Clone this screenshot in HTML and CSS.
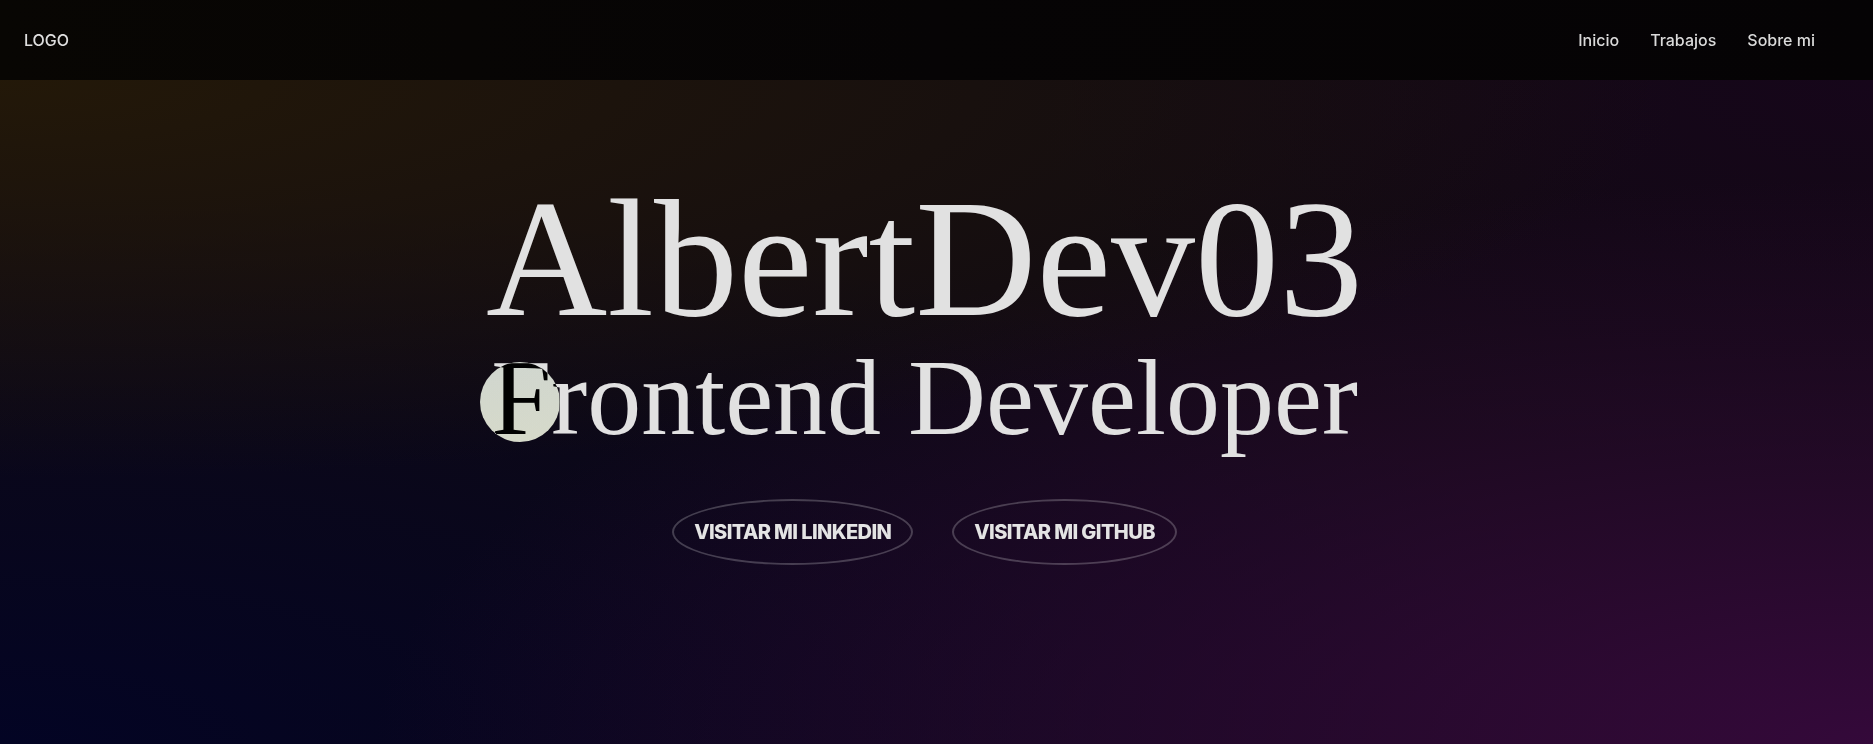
FILE: index.html
```html
<!DOCTYPE html>
<html lang="es">
<head>
<meta charset="utf-8">
<title>AlbertDev03</title>
<link rel="stylesheet" href="styles.css">
</head>
<body>
<header class="site-header">
  <a class="logo" href="#">LOGO</a>
  <nav class="nav">
    <a href="#">Inicio</a>
    <a href="#">Trabajos</a>
    <a href="#">Sobre mi</a>
  </nav>
</header>
<main class="hero">
  <div class="hero-content">
    <h1 class="title">AlbertDev03</h1>
    <h2 class="subtitle">Frontend Developer</h2>
    <div class="actions">
      <a class="btn" href="#">VISITAR MI LINKEDIN</a>
      <a class="btn" href="#">VISITAR MI GITHUB</a>
    </div>
  </div>
</main>
<div class="cursor"></div>
</body>
</html>
```

FILE: styles.css
```css
* { box-sizing: border-box; }
html, body { margin: 0; padding: 0; }
body {
  background: #0d0912;
  font-family: Inter, "Noto Sans", sans-serif;
  color: #e0e0e0;
  overflow: hidden;
  position: relative;
}
a { color: inherit; text-decoration: none; }

.site-header {
  height: 80px;
  display: flex;
  align-items: center;
  justify-content: space-between;
  padding: 0 58px 0 24px;
  background: linear-gradient(to right, #080603, #060405 50%, #050305);
}
.logo {
  font-size: 16px;
  font-weight: 500;
  color: #dedede;
}
.nav {
  display: flex;
  gap: 31px;
}
.nav a {
  font-size: 16px;
  font-weight: 500;
  color: #dadada;
}

.hero {
  min-height: 664px;
  background:
    radial-gradient(ellipse 90% 60% at 0% 0%, rgba(36, 25, 8, 0.95), rgba(36, 25, 8, 0) 100%),
    radial-gradient(ellipse 80% 85% at 100% 100%, rgba(52, 9, 58, 1), rgba(52, 9, 58, 0) 100%),
    radial-gradient(ellipse 90% 85% at 0% 100%, rgba(3, 4, 36, 1), rgba(3, 4, 36, 0) 100%),
    radial-gradient(ellipse 45% 60% at 100% 0%, rgba(22, 6, 26, 1), rgba(22, 6, 26, 0) 100%),
    #100a12;
}
.hero-content {
  display: flex;
  flex-direction: column;
  align-items: center;
  padding: 94px 24px 0 0;
}
.title {
  margin: 0;
  font-family: "Liberation Serif", "Times New Roman", serif;
  font-weight: 400;
  font-size: 168px;
  line-height: 1;
  color: #e1e1e1;
  font-variant-numeric: oldstyle-nums;
}
.subtitle {
  margin: 2px 0 0;
  font-family: "Liberation Serif", "Times New Roman", serif;
  font-weight: 400;
  font-size: 108px;
  line-height: 1;
  color: #e1e1e1;
}
.actions {
  display: flex;
  gap: 39px;
  margin-top: 47px;
}
.btn {
  display: flex;
  align-items: center;
  justify-content: center;
  height: 66px;
  padding: 0 20px;
  border: 2px solid rgba(255, 255, 255, 0.22);
  border-radius: 50%;
  font-family: Inter, "Noto Sans", sans-serif;
  font-weight: 800;
  font-size: 20px;
  letter-spacing: -0.6px;
  color: #e4e4e4;
}

.cursor {
  position: absolute;
  left: 480px;
  top: 362px;
  width: 80px;
  height: 80px;
  border-radius: 50%;
  background: #e2e2e2;
  mix-blend-mode: difference;
  pointer-events: none;
}
```
